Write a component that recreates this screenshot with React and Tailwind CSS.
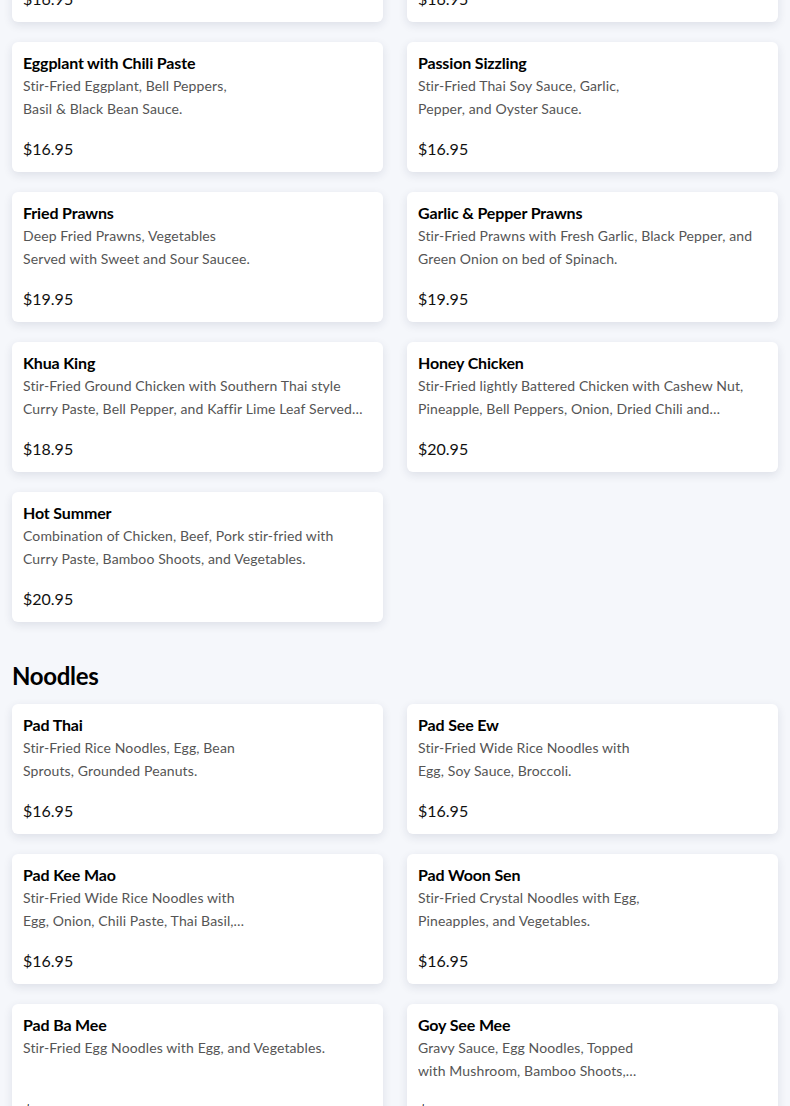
const ENTREES = [
  { name: "Pad Prik King", desc: "Stir-Fried Green Beans, Bell Peppers,\nPrik King Curry Paste.", price: "$16.95" },
  { name: "Spicy Basil", desc: "Stir-Fried Thai Basil, Chili, Onion,\nBell Pepper, and Garlic.", price: "$16.95" },
  { name: "Eggplant with Chili Paste", desc: "Stir-Fried Eggplant, Bell Peppers,\nBasil & Black Bean Sauce.", price: "$16.95" },
  { name: "Passion Sizzling", desc: "Stir-Fried Thai Soy Sauce, Garlic,\nPepper, and Oyster Sauce.", price: "$16.95" },
  { name: "Fried Prawns", desc: "Deep Fried Prawns, Vegetables\nServed with Sweet and Sour Saucee.", price: "$19.95" },
  { name: "Garlic & Pepper Prawns", desc: "Stir-Fried Prawns with Fresh Garlic, Black Pepper, and Green Onion on bed of Spinach.", price: "$19.95" },
  { name: "Khua King", desc: "Stir-Fried Ground Chicken with Southern Thai style\nCurry Paste, Bell Pepper, and Kaffir Lime Leaf Served with Rice.", price: "$18.95" },
  { name: "Honey Chicken", desc: "Stir-Fried lightly Battered Chicken with Cashew Nut,\nPineapple, Bell Peppers, Onion, Dried Chili and\nHoney Sauce.", price: "$20.95" },
  { name: "Hot Summer", desc: "Combination of Chicken, Beef, Pork stir-fried with\nCurry Paste, Bamboo Shoots, and Vegetables.", price: "$20.95" },
];

const NOODLES = [
  { name: "Pad Thai", desc: "Stir-Fried Rice Noodles, Egg, Bean\nSprouts, Grounded Peanuts.", price: "$16.95" },
  { name: "Pad See Ew", desc: "Stir-Fried Wide Rice Noodles with\nEgg, Soy Sauce, Broccoli.", price: "$16.95" },
  { name: "Pad Kee Mao", desc: "Stir-Fried Wide Rice Noodles with\nEgg, Onion, Chili Paste, Thai Basil,\nTomatoes, Bell Peppers.", price: "$16.95" },
  { name: "Pad Woon Sen", desc: "Stir-Fried Crystal Noodles with Egg,\nPineapples, and Vegetables.", price: "$16.95" },
  { name: "Pad Ba Mee", desc: "Stir-Fried Egg Noodles with Egg, and Vegetables.", price: "$16.95" },
  { name: "Goy See Mee", desc: "Gravy Sauce, Egg Noodles, Topped\nwith Mushroom, Bamboo Shoots,\nand Vegetables.", price: "$16.95" },
];

function Card({ item }) {
  return (
    <div className="bg-white rounded-md shadow-[0_3px_10px_rgba(30,40,70,0.11)] h-[130px] px-[11px] pt-[11px]">
      <h3 className="text-[16px] leading-[20px] font-bold text-black tracking-[-0.15px]">{item.name}</h3>
      <p className="mt-[1px] h-[46px] text-[14px] leading-[23px] text-[#555] tracking-[0.12px] whitespace-pre-line line-clamp-2 overflow-hidden">
        {item.desc}
      </p>
      <p className="mt-[17px] text-[16px] leading-[24px] text-[#111]">{item.price}</p>
    </div>
  );
}

export default function App() {
  return (
    <div className="min-h-screen bg-[#f5f7fb] overflow-hidden" style={{ fontFamily: "Lato, 'Open Sans', sans-serif" }}>
      <div className="px-3 -mt-[108px]">
        <div className="grid grid-cols-2 gap-x-6 gap-y-5">
          {ENTREES.map((it) => (
            <Card key={it.name} item={it} />
          ))}
        </div>

        <h2 className="mt-[38px] mb-3 text-[24px] leading-[32px] font-bold text-black tracking-[-0.3px]">Noodles</h2>

        <div className="grid grid-cols-2 gap-x-6 gap-y-5 pb-8">
          {NOODLES.map((it) => (
            <Card key={it.name} item={it} />
          ))}
        </div>
      </div>
    </div>
  );
}
